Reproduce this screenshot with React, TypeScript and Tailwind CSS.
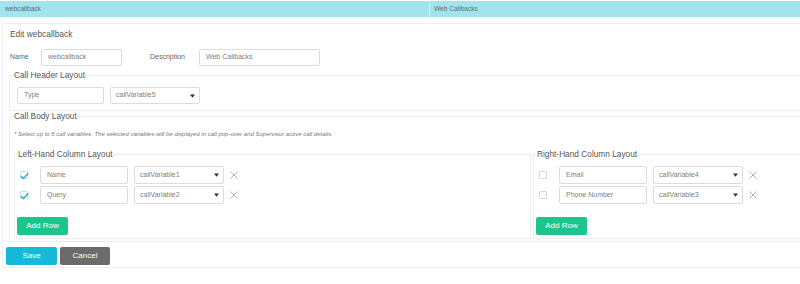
import React from 'react';

const LEFT_ROWS = [
  { label: 'Name', variable: 'callVariable1', checked: true },
  { label: 'Query', variable: 'callVariable2', checked: true },
];

const RIGHT_ROWS = [
  { label: 'Email', variable: 'callVariable4', checked: false },
  { label: 'Phone Number', variable: 'callVariable3', checked: false },
];

function Caret() {
  return (
    <svg width="5" height="4" viewBox="0 0 5 4" className="shrink-0">
      <path d="M0 0.5 H5 L2.5 3.8 Z" fill="#333" />
    </svg>
  );
}

function CloseX() {
  return (
    <svg width="8" height="8" viewBox="0 0 8 8" className="shrink-0">
      <path d="M0.5 0.5 L7.5 7.5 M7.5 0.5 L0.5 7.5" stroke="#a0a0a0" strokeWidth="0.8" fill="none" />
    </svg>
  );
}

function Checkbox({ checked }: { checked: boolean }) {
  return (
    <div className="relative w-[8px] h-[8px] shrink-0 border border-[#d8d8d8] rounded-[1px] bg-white">
      {checked && (
        <svg width="9" height="8" viewBox="0 0 9 8" className="absolute left-[-1px] top-[0px]">
          <path d="M1 4.2 L3.4 6.6 L8.2 1.2" stroke="#22aadd" strokeWidth="1.4" fill="none" />
        </svg>
      )}
    </div>
  );
}

function TextBox({ value, width, height = 'h-[18px]' }: { value: string; width: string; height?: string }) {
  return (
    <div className={`${width} ${height} shrink-0 flex items-center px-[6px] border border-[#dcdcdc] rounded-[2px] text-[7px] text-[#808080] bg-white`}>
      {value}
    </div>
  );
}

function SelectBox({ value, height = 'h-[18px]' }: { value: string; height?: string }) {
  return (
    <div className={`w-[90px] ${height} shrink-0 flex items-center justify-between pl-[5px] pr-[4px] border border-[#dcdcdc] rounded-[2px] text-[7px] text-[#808080] bg-white`}>
      <span>{value}</span>
      <Caret />
    </div>
  );
}

function VariableRow({ label, variable, checked }: { label: string; variable: string; checked: boolean }) {
  return (
    <div className="flex items-center">
      <div className="ml-[3px]">
        <Checkbox checked={checked} />
      </div>
      <div className="ml-[12px] flex items-center gap-[6px]">
        <TextBox value={label} width="w-[88px]" />
        <SelectBox value={variable} />
        <CloseX />
      </div>
    </div>
  );
}

function ColumnLayout({ title, rows, className }: { title: string; rows: typeof LEFT_ROWS; className: string }) {
  return (
    <fieldset className={`${className} border border-[#ececec] pl-[2px] pt-[7px] pb-[3px]`}>
      <legend className="ml-px text-[8.3px] leading-[10px] text-[#555]">{title}</legend>
      <div className="flex flex-col gap-[2px]">
        {rows.map((r) => (
          <VariableRow key={r.label} {...r} />
        ))}
      </div>
      <button className="mt-[13px] w-[51px] h-[18px] rounded-[2px] bg-[#1ec48e] text-white text-[8px] flex items-center justify-center">
        Add Row
      </button>
    </fieldset>
  );
}

export default function App() {
  return (
    <div className="w-[800px] h-[284px] overflow-hidden bg-white text-[#555] font-['Liberation_Sans',Arial,sans-serif]">
      <div className="w-[840px]">
        <div className="mt-px h-4 flex bg-[#a2e4ee] text-[6.6px] text-[#5f6f73]">
          <div className="w-[430px] pl-[5px] flex items-center border-r border-[#d2f1f6]">webcallback</div>
          <div className="pl-[4px] flex items-center">Web Callbacks</div>
        </div>

        <div className="mt-[6px] ml-[2px] border border-[#efefef] pl-[3px] pb-[2px]">
          <div className="pl-[4px] pt-[5px]">
            <div className="text-[8.4px] leading-[11px] text-[#555]">Edit webcallback</div>
            <div className="mt-[9px] flex items-center">
              <div className="w-[31px] text-[7px] text-[#666]">Name</div>
              <TextBox value="webcallback" width="w-[81px]" height="h-[17px]" />
              <div className="ml-[28px] w-[49px] text-[7px] text-[#666]">Description</div>
              <TextBox value="Web Callbacks" width="w-[121px]" height="h-[17px]" />
            </div>
          </div>

          <fieldset className="mt-[4px] mx-[3px] border border-[#ececec] pl-[4px] pt-[7px] pb-[6px]">
            <legend className="text-[8.3px] leading-[10px] text-[#555]">Call Header Layout</legend>
            <div className="ml-[3px] flex items-center gap-[6px]">
              <TextBox value="Type" width="w-[87px]" height="h-[17px]" />
              <SelectBox value="callVariable5" height="h-[17px]" />
            </div>
          </fieldset>

          <fieldset className="mx-[3px] border border-[#ececec] pl-[4px] pt-[9px] pb-[2px]">
            <legend className="text-[8.3px] leading-[10px] text-[#555]">Call Body Layout</legend>
            <div className="text-[6px] leading-[8px] italic text-[#777]">
              * Select up to 5 call variables. The selected variables will be displayed in call pop-over and Supervisor active call details.
            </div>
            <div className="mt-[11px] flex">
              <ColumnLayout title="Left-Hand Column Layout" rows={LEFT_ROWS} className="w-[517px] shrink-0" />
              <ColumnLayout title="Right-Hand Column Layout" rows={RIGHT_ROWS} className="ml-[2px] flex-1" />
            </div>
          </fieldset>

          <div className="mt-[5px] flex gap-[3px]">
            <button className="w-[51px] h-[18px] rounded-[2px] bg-[#16b9d7] text-white text-[8px] flex items-center justify-center">
              Save
            </button>
            <button className="w-[50px] h-[18px] rounded-[2px] bg-[#6b6b6b] text-white text-[8px] flex items-center justify-center">
              Cancel
            </button>
          </div>
        </div>
      </div>
    </div>
  );
}
